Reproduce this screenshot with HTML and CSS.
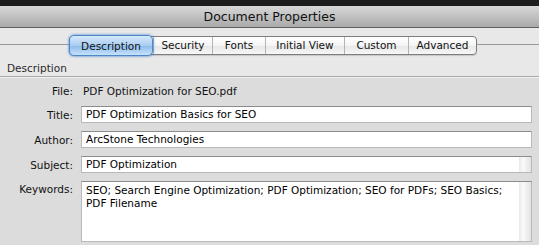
FILE: index.html
```html
<!DOCTYPE html>
<html lang="en">
<head>
    <meta charset="UTF-8">
    <title>Document Properties</title>
    <link rel="stylesheet" href="styles.css">
</head>
<body>
    <div class="top-strip"></div>
    <div class="title-bar">Document Properties</div>

    <div class="tab-area">
        <div class="tab-row">
            <div class="tabs">
                <div class="tab selected">Description</div>
                <div class="tab">Security</div>
                <div class="tab">Fonts</div>
                <div class="tab">Initial View</div>
                <div class="tab">Custom</div>
                <div class="tab">Advanced</div>
            </div>
        </div>
        <div class="section-label">Description</div>
    </div>

    <div class="form">
        <div class="label">File:</div>
        <div class="value">PDF Optimization for SEO.pdf</div>

        <div class="label">Title:</div>
        <div class="field">PDF Optimization Basics for SEO</div>

        <div class="label">Author:</div>
        <div class="field">ArcStone Technologies</div>

        <div class="label">Subject:</div>
        <div class="field scroll">PDF Optimization</div>

        <div class="label top">Keywords:</div>
        <div class="field scroll area">SEO; Search Engine Optimization; PDF Optimization; SEO for PDFs; SEO Basics;<br>PDF Filename</div>
    </div>
</body>
</html>
```

FILE: styles.css
```css
body {
    margin: 0;
    width: 539px;
    height: 245px;
    overflow: hidden;
    background-color: #dcdcdc;
    font-family: "DejaVu Sans", sans-serif;
    font-size: 10.5px;
    color: #111;
}

.top-strip {
    height: 6px;
    background-color: #1d1d1d;
}

.title-bar {
    height: 21px;
    line-height: 21px;
    text-align: center;
    font-size: 12.5px;
    color: #111;
    background: linear-gradient(#d8d8d8, #a9a9a9);
    border-bottom: 1px solid #5f5f5f;
}

.tab-area {
    background-color: #e8e8e8;
    border-bottom: 1px solid #a9a9a9;
    box-shadow: 0 1px 0 #f2f2f2;
}

.tab-row {
    position: relative;
    padding: 8px 0 0 69px;
    height: 19px;
}

.tab-row::before {
    content: "";
    position: absolute;
    left: 0;
    right: 0;
    top: 16px;
    border-top: 1px solid #9a9a9a;
}

.tabs {
    position: relative;
    display: flex;
    width: 406px;
    height: 17px;
    border: 1px solid #7d7d7d;
    border-radius: 4px;
    background: linear-gradient(#ffffff, #f4f4f4 50%, #e6e6e6 51%, #f7f7f7);
    box-shadow: 0 1px 1px rgba(0, 0, 0, 0.15);
}

.tab {
    line-height: 17px;
    text-align: center;
    border-left: 1px solid #b4b4b4;
}

.tab:nth-child(1) { width: 82px; border-left: none; }
.tab:nth-child(2) { width: 58px; }
.tab:nth-child(3) { width: 52px; }
.tab:nth-child(4) { width: 78px; }
.tab:nth-child(5) { width: 63px; }
.tab:nth-child(6) { flex: 1; }

.tab.selected {
    margin: -2px 0 -2px -1px;
    line-height: 21px;
    border-radius: 5px;
    border: 1px solid #4f86c6;
    background: linear-gradient(#d6e9fb, #a9cdf2 50%, #8dbcec 51%, #c5e1fb);
    box-shadow: 0 0 2px 1px rgba(73, 140, 220, 0.55);
    position: relative;
    z-index: 1;
}

.section-label {
    padding: 7px 7px 0;
    height: 14px;
    color: #2a2a2a;
}

.form {
    display: grid;
    grid-template-columns: 73px 451px;
    column-gap: 8px;
    row-gap: 8px;
    padding-top: 7px;
}

.label {
    text-align: right;
    align-self: center;
}

.label.top {
    align-self: start;
    padding-top: 2px;
}

.value {
    height: 14px;
    line-height: 14px;
    padding-left: 2px;
}

.field {
    height: 15px;
    line-height: 15px;
    padding-left: 4px;
    background-color: #fff;
    border: 1px solid #b9b9b9;
    border-top-color: #8c8c8c;
    color: #000;
}

.field.scroll {
    background: linear-gradient(to right, #fff calc(100% - 12px), #e9e9e9 calc(100% - 12px), #fafafa calc(100% - 8px), #e2e2e2 100%);
}

.field.area {
    height: 57px;
    line-height: 13px;
    padding-top: 2px;
}
```
